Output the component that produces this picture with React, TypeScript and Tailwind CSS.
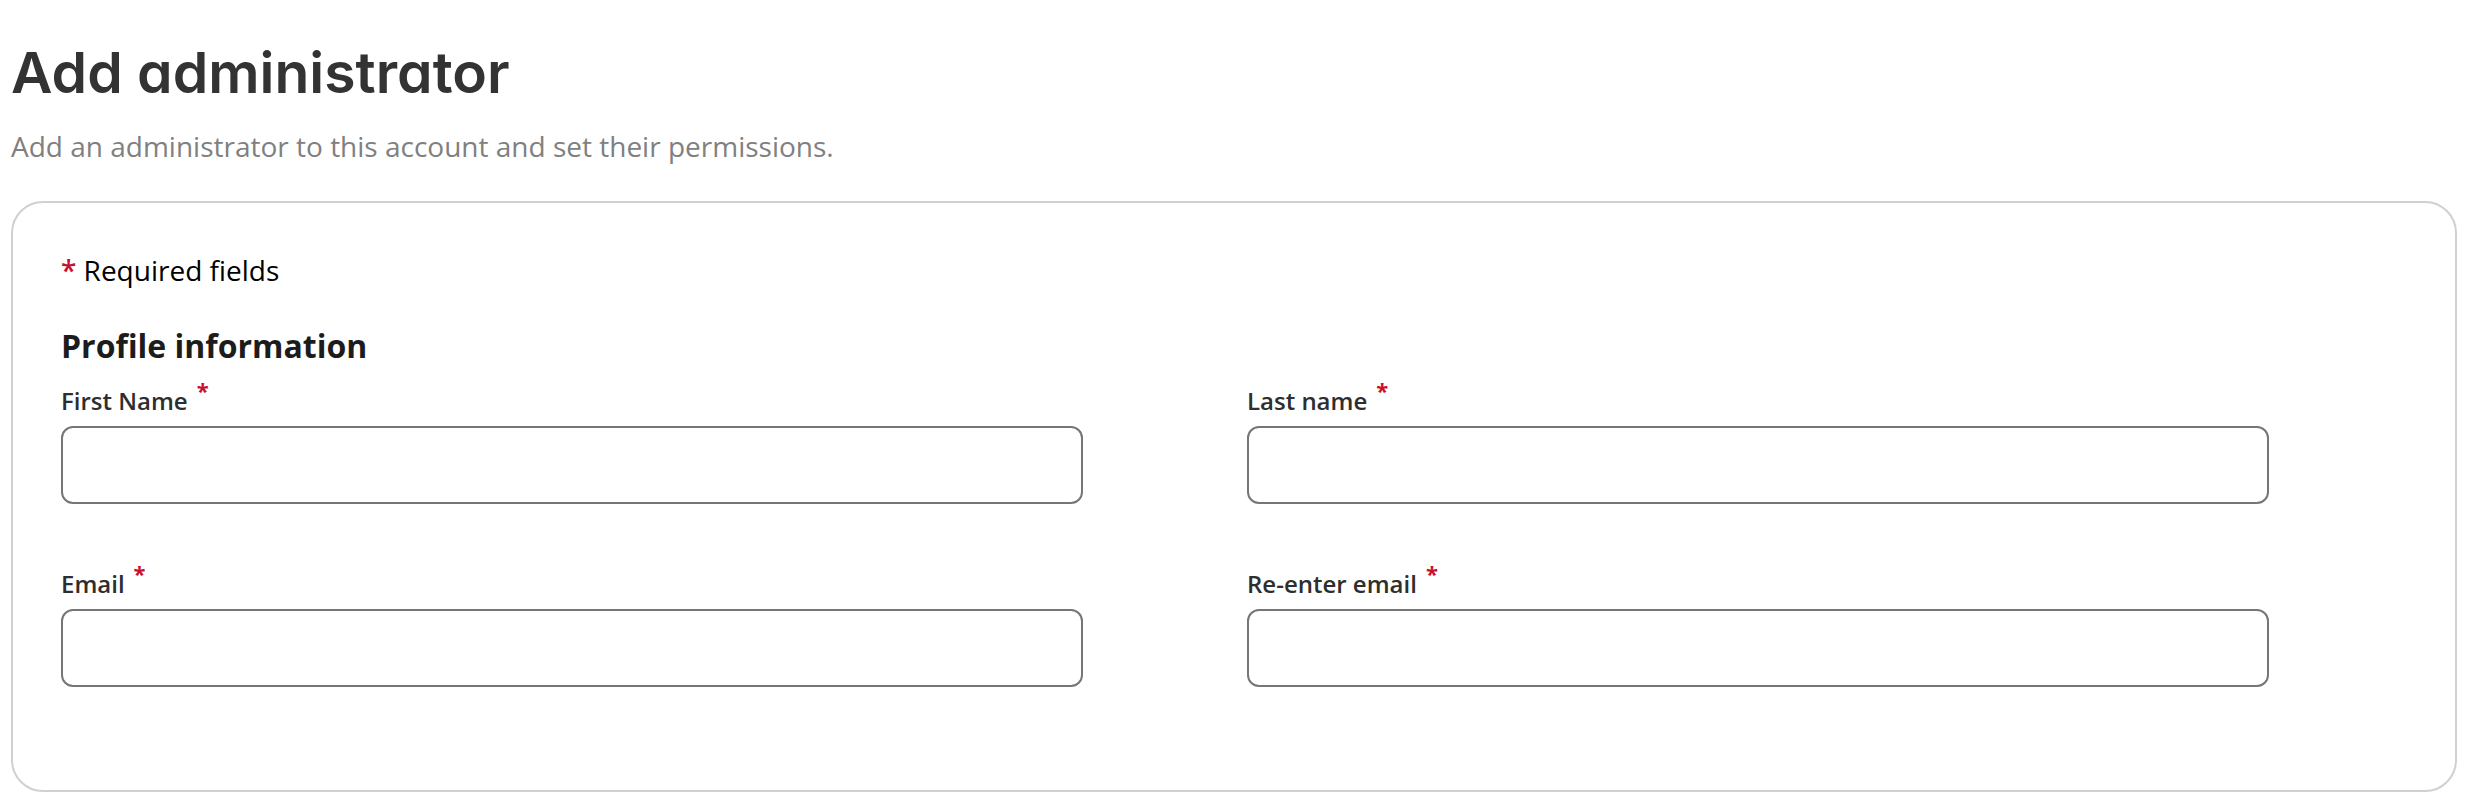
import React from 'react';

const fields = [
  { id: 'firstName', label: 'First Name', type: 'text' },
  { id: 'lastName', label: 'Last name', type: 'text' },
  { id: 'email', label: 'Email', type: 'email' },
  { id: 'confirmEmail', label: 'Re-enter email', type: 'email' },
];

function Field({ id, label, type }: { id: string; label: string; type: string }) {
  return (
    <div className="flex flex-col">
      <label htmlFor={id} className="flex items-start h-[32px] text-[24px] leading-[32px] font-semibold text-[#2e2e2e]">
        <span>{label}</span>
        <span className="ml-[9px] -mt-[6px] text-[#c8102e] text-[22px] leading-[22px] font-bold">*</span>
      </label>
      <input
        id={id}
        type={type}
        className="mt-[9px] h-[78px] w-full rounded-[12px] border-2 border-[#767676] bg-white px-4 text-[24px] outline-none"
      />
    </div>
  );
}

export default function App() {
  return (
    <div className="min-h-screen bg-white pl-[11px] pr-[29px] font-['Open_Sans',sans-serif]">
      <h1 className="pt-[39px] text-[57px] leading-[68px] font-semibold text-[#333333] font-['Inter',sans-serif] [font-feature-settings:'cv11']">
        Add administrator
      </h1>
      <p className="mt-[19px] text-[28px] leading-[40px] text-[#808080]">
        Add an administrator to this account and set their permissions.
      </p>

      <div className="mt-[35px] rounded-[32px] border-2 border-[#d0d0d0] pl-[48px] pt-[47px] pb-[103px]">
        <p className="text-[28px] leading-[40px] text-black">
          <span className="text-[#c8102e] font-semibold">*</span> Required fields
        </p>
        <h2 className="mt-[34px] text-[32px] leading-[44px] font-bold text-[#1c1c1c]">Profile information</h2>

        <div className="mt-[17px] grid grid-cols-[1022px_1022px] gap-x-[164px] gap-y-[64px]">
          {fields.map((f) => (
            <Field key={f.id} {...f} />
          ))}
        </div>
      </div>
    </div>
  );
}
